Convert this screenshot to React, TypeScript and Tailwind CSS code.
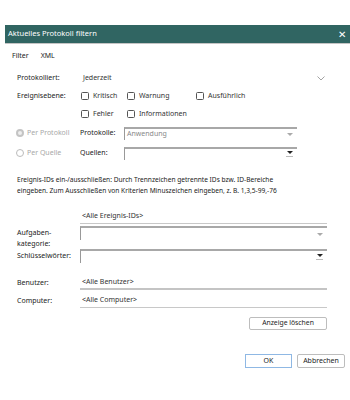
import React from "react";

const Check = ({ label }: { label: string }) => (
  <div className="flex items-center gap-[4px]">
    <span className="w-[8px] h-[8px] border border-[#555] rounded-[1.5px] bg-white" />
    <span className="text-[#333]">{label}</span>
  </div>
);

const Arrow = ({ dark }: { dark?: boolean }) => (
  <span className="flex flex-col items-center gap-[1px]">
    <span
      className={`w-0 h-0 border-l-[3px] border-r-[3px] border-t-[3px] border-l-transparent border-r-transparent ${
        dark ? "border-t-[#222]" : "border-t-[#aaa]"
      }`}
    />
    {dark && <span className="w-[7px] h-[1px] bg-[#bbb] mt-[1px]" />}
  </span>
);

const App = () => {
  return (
    <div className="w-[350px] h-[400px] bg-white font-['Noto_Sans','Open_Sans',sans-serif] text-[7px] text-[#333] overflow-hidden">
      <div className="h-[25px]" />
      <div className="ml-[5px] w-[345px]">
        {/* title bar */}
        <div className="h-[19px] bg-[#306562] flex items-center justify-between pl-[3px] pr-[4px] text-white text-[7.5px] border-b border-[#c4c4c4]">
          <span>Aktuelles Protokoll filtern</span>
          <span className="text-[10px] leading-none font-light">✕</span>
        </div>

        {/* tabs */}
        <div className="mt-[6px] h-[12px] flex items-center gap-[12px] pl-[7px] text-[#222]">
          <span>Filter</span>
          <span>XML</span>
        </div>

        <div className="pl-[12px] w-[322px]">
          {/* Protokolliert */}
          <div className="mt-[9px] h-[14px] flex items-center">
            <span className="w-[63px] text-[#222]">Protokolliert:</span>
            <span className="pl-[3px] flex-1">Jederzeit</span>
            <svg width="8" height="5" viewBox="0 0 8 5" className="mr-[2px]">
              <path d="M0.5 0.5 L4 4 L7.5 0.5" fill="none" stroke="#999" strokeWidth="0.9" />
            </svg>
          </div>

          {/* Ereignisebene */}
          <div className="mt-[4px] h-[14px] flex items-center">
            <span className="w-[64px] text-[#222]">Ereignisebene:</span>
            <div className="w-[46px]">
              <Check label="Kritisch" />
            </div>
            <div className="w-[69px]">
              <Check label="Warnung" />
            </div>
            <Check label="Ausführlich" />
          </div>
          <div className="mt-[4px] h-[14px] flex items-center">
            <span className="w-[64px]" />
            <div className="w-[46px]">
              <Check label="Fehler" />
            </div>
            <Check label="Informationen" />
          </div>

          {/* Per Protokoll */}
          <div className="mt-[5px] h-[14px] flex items-center -ml-[1px]">
            <div className="w-[64px] flex items-center gap-[3px] text-[#a8a8a8]">
              <span className="w-[8px] h-[8px] rounded-full border-[2.5px] border-[#c4c4c4] bg-[#eee]" />
              <span>Per Protokoll</span>
            </div>
            <span className="w-[44px] text-[#222]">Protokolle:</span>
            <div className="w-[173px] h-[13px] border-t-2 border-l border-t-[#a8a8a8] border-l-[#999] flex items-center justify-between pl-[2px] pr-[4px] text-[#888]">
              <span>Anwendung</span>
              <Arrow />
            </div>
          </div>

          {/* Per Quelle */}
          <div className="mt-[6px] h-[14px] flex items-center -ml-[1px]">
            <div className="w-[64px] flex items-center gap-[3px] text-[#a8a8a8]">
              <span className="w-[8px] h-[8px] rounded-full border border-[#bbb]" />
              <span>Per Quelle</span>
            </div>
            <span className="w-[44px] text-[#222]">Quellen:</span>
            <div className="w-[173px] h-[13px] border-t-2 border-l border-t-[#a8a8a8] border-l-[#999] flex items-center justify-end pr-[4px]">
              <Arrow dark />
            </div>
          </div>

          {/* paragraph */}
          <p className="mt-[14px] leading-[11px] whitespace-nowrap text-[6.6px] text-[#222]">
            Ereignis-IDs ein-/ausschließen: Durch Trennzeichen getrennte IDs bzw. ID-Bereiche
            <br />
            eingeben. Zum Ausschließen von Kriterien Minuszeichen eingeben, z. B. 1,3,5-99,-76
          </p>

          {/* Ereignis-IDs */}
          <div className="mt-[14px] flex">
            <span className="w-[63px]" />
            <div className="flex-1 h-[14px] flex items-center pl-[2px] border-b border-[#c8c8c8]">
              &lt;Alle Ereignis-IDs&gt;
            </div>
          </div>

          {/* Aufgabenkategorie */}
          <div className="mt-[2px] flex">
            <span className="w-[63px] leading-[11px] pt-[1px] text-[#222]">
              Aufgaben-
              <br />
              kategorie:
            </span>
            <div className="flex-1 h-[14px] border-t-2 border-l border-t-[#a8a8a8] border-l-[#999] flex items-center justify-end pr-[4px]">
              <Arrow />
            </div>
          </div>

          {/* Schlüsselwörter */}
          <div className="flex items-start">
            <span className="w-[63px] h-[14px] flex items-center text-[#222]">Schlüsselwörter:</span>
            <div className="flex-1 h-[14px] border-t-2 border-l border-t-[#a8a8a8] border-l-[#999] flex items-center justify-end pr-[4px]">
              <Arrow dark />
            </div>
          </div>

          {/* Benutzer */}
          <div className="mt-[13px] flex items-center">
            <span className="w-[63px] text-[#222]">Benutzer:</span>
            <div className="flex-1 h-[14px] flex items-center pl-[2px] border-b-2 border-[#c4c4c4]">
              &lt;Alle Benutzer&gt;
            </div>
          </div>

          {/* Computer */}
          <div className="mt-[4px] flex items-center">
            <span className="w-[63px] text-[#222]">Computer:</span>
            <div className="flex-1 h-[14px] flex items-center pl-[2px] border-b border-[#c8c8c8]">
              &lt;Alle Computer&gt;
            </div>
          </div>

          {/* Anzeige löschen */}
          <div className="mt-[9px] flex justify-end">
            <button className="w-[78px] h-[13px] border border-[#bdbdbd] rounded-[2px] text-[6.8px] text-[#222] flex items-center justify-center">
              Anzeige löschen
            </button>
          </div>
        </div>

        {/* OK / Abbrechen */}
        <div className="mt-[24px] flex justify-end gap-[5px] pr-[5px]">
          <button className="w-[47px] h-[14px] border border-[#8fb8e4] text-[#222] flex items-center justify-center">
            OK
          </button>
          <button className="w-[48px] h-[14px] border border-[#bdbdbd] rounded-[2px] text-[#222] flex items-center justify-center">
            Abbrechen
          </button>
        </div>
      </div>
    </div>
  );
};

export default App;
